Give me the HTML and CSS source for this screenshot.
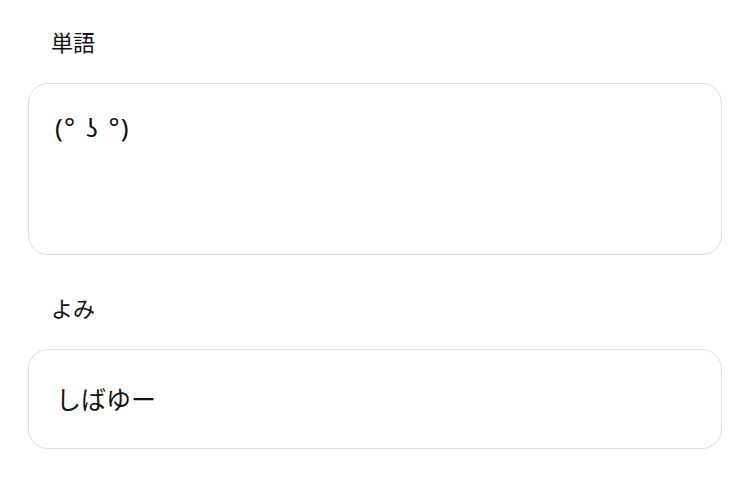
FILE: index.html
```html
<!DOCTYPE html>
<html lang="ja">
<head>
  <meta charset="UTF-8">
  <title>単語登録</title>
  <link rel="stylesheet" href="styles.css">
</head>
<body>
<div class="form">
  <div class="field">
    <div class="label">単語</div>
    <div class="box word">(° ʖ °)</div>
  </div>
  <div class="field">
    <div class="label">よみ</div>
    <div class="box reading">しばゆー</div>
  </div>
</div>
</body>
</html>
```
FILE: styles.css
```css
body {
  margin: 0;
  background: #fff;
  font-family: "Noto Sans", "Noto Sans CJK JP", sans-serif;
  color: #111;
}
.form {
  padding: 26px 28px 0 28px;
  display: flex;
  flex-direction: column;
  gap: 37px;
}
.field {
  display: flex;
  flex-direction: column;
  gap: 25px;
}
.label {
  margin-left: 23px;
  font-size: 22px;
  line-height: 32px;
}
.box {
  border: 1px solid #dedede;
  border-radius: 20px;
  box-sizing: border-box;
  font-size: 25px;
  line-height: 34px;
}
.box.word {
  height: 172px;
  padding: 26px 0 0 26px;
  font-size: 26px;
  word-spacing: 2px;
  letter-spacing: 1.2px;
}
.box.reading {
  height: 100px;
  padding: 0 0 0 27px;
  display: flex;
  align-items: center;
}
```
